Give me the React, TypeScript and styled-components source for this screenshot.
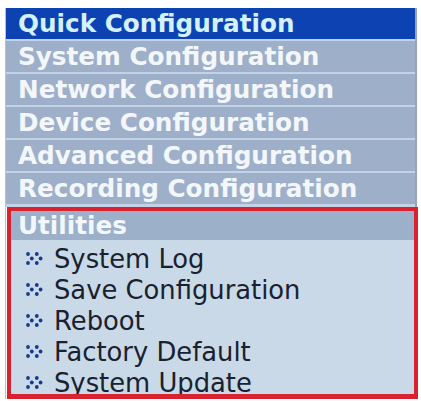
import styled, { createGlobalStyle } from "styled-components";

const GlobalStyle = createGlobalStyle`
  html, body {
    margin: 0;
    padding: 0;
    background: #ffffff;
  }
  body {
    font-family: "DejaVu Sans", Verdana, sans-serif;
  }
`

const Page = styled.div`
  padding: 8px 0 0 5px;
  width: 421px;
  height: 401px;
  box-sizing: border-box;
  overflow: hidden;
`

const Panel = styled.div`
  width: 412px;
  border-left: 1px solid #b9c2d0;
  box-sizing: border-box;
`

const Nav = styled.div`
  display: flex;
  flex-direction: column;
  gap: 2px;
  padding-bottom: 3px;
  background: #c4d2e7;
  border-right: 2px solid #97a3b8;
`

const NavRow = styled.div<{ $active?: boolean }>`
  height: 31px;
  line-height: 31px;
  padding-left: 12px;
  font-size: 24.7px;
  font-weight: bold;
  white-space: nowrap;
  background: ${(p) => (p.$active ? "#0c42b2" : "#9eb0c9")};
  color: ${(p) => (p.$active ? "#d4f1ff" : "#f3f7fb")};
`

const RedBox = styled.div`
  margin-left: 1px;
  width: 411px;
  height: 192px;
  border: 4px solid #d8222f;
  border-bottom-width: 5px;
  box-sizing: border-box;
  display: flex;
  flex-direction: column;
  overflow: hidden;
`

const GroupTitle = styled.div`
  height: 29px;
  line-height: 29px;
  padding-left: 7px;
  font-size: 24.7px;
  font-weight: bold;
  color: #f3f7fb;
  background: #9db0c9;
`

const ItemList = styled.ul`
  flex: 1;
  margin: 0;
  padding: 3px 0 0 15px;
  list-style: none;
  background: #c9d9e7;
  overflow: hidden;
`

const Item = styled.li`
  display: flex;
  align-items: center;
  gap: 10px;
  height: 31px;
  font-size: 25.8px;
  color: #19212e;
  white-space: nowrap;
`

const DotArrow = () => (
  <svg width="18" height="13" viewBox="0 0 18 13">
    {[0, 8.8].map((ox) => (
      <g key={ox} fill="#163a8c">
        <circle cx={ox + 2} cy={2} r={1.9} />
        <circle cx={ox + 5.8} cy={6.5} r={1.9} />
        <circle cx={ox + 2} cy={11} r={1.9} />
      </g>
    ))}
  </svg>
)

const sections = [
  "Quick Configuration",
  "System Configuration",
  "Network Configuration",
  "Device Configuration",
  "Advanced Configuration",
  "Recording Configuration",
]

const utilities = [
  "System Log",
  "Save Configuration",
  "Reboot",
  "Factory Default",
  "System Update",
]

const App = () => {
  return (
    <Page>
      <GlobalStyle />
      <Panel>
        <Nav>
          {sections.map((s, i) => (
            <NavRow key={s} $active={i === 0}>{s}</NavRow>
          ))}
        </Nav>
        <RedBox>
          <GroupTitle>Utilities</GroupTitle>
          <ItemList>
            {utilities.map((u) => (
              <Item key={u}>
                <DotArrow />
                {u}
              </Item>
            ))}
          </ItemList>
        </RedBox>
      </Panel>
    </Page>
  );
}

export default App;
